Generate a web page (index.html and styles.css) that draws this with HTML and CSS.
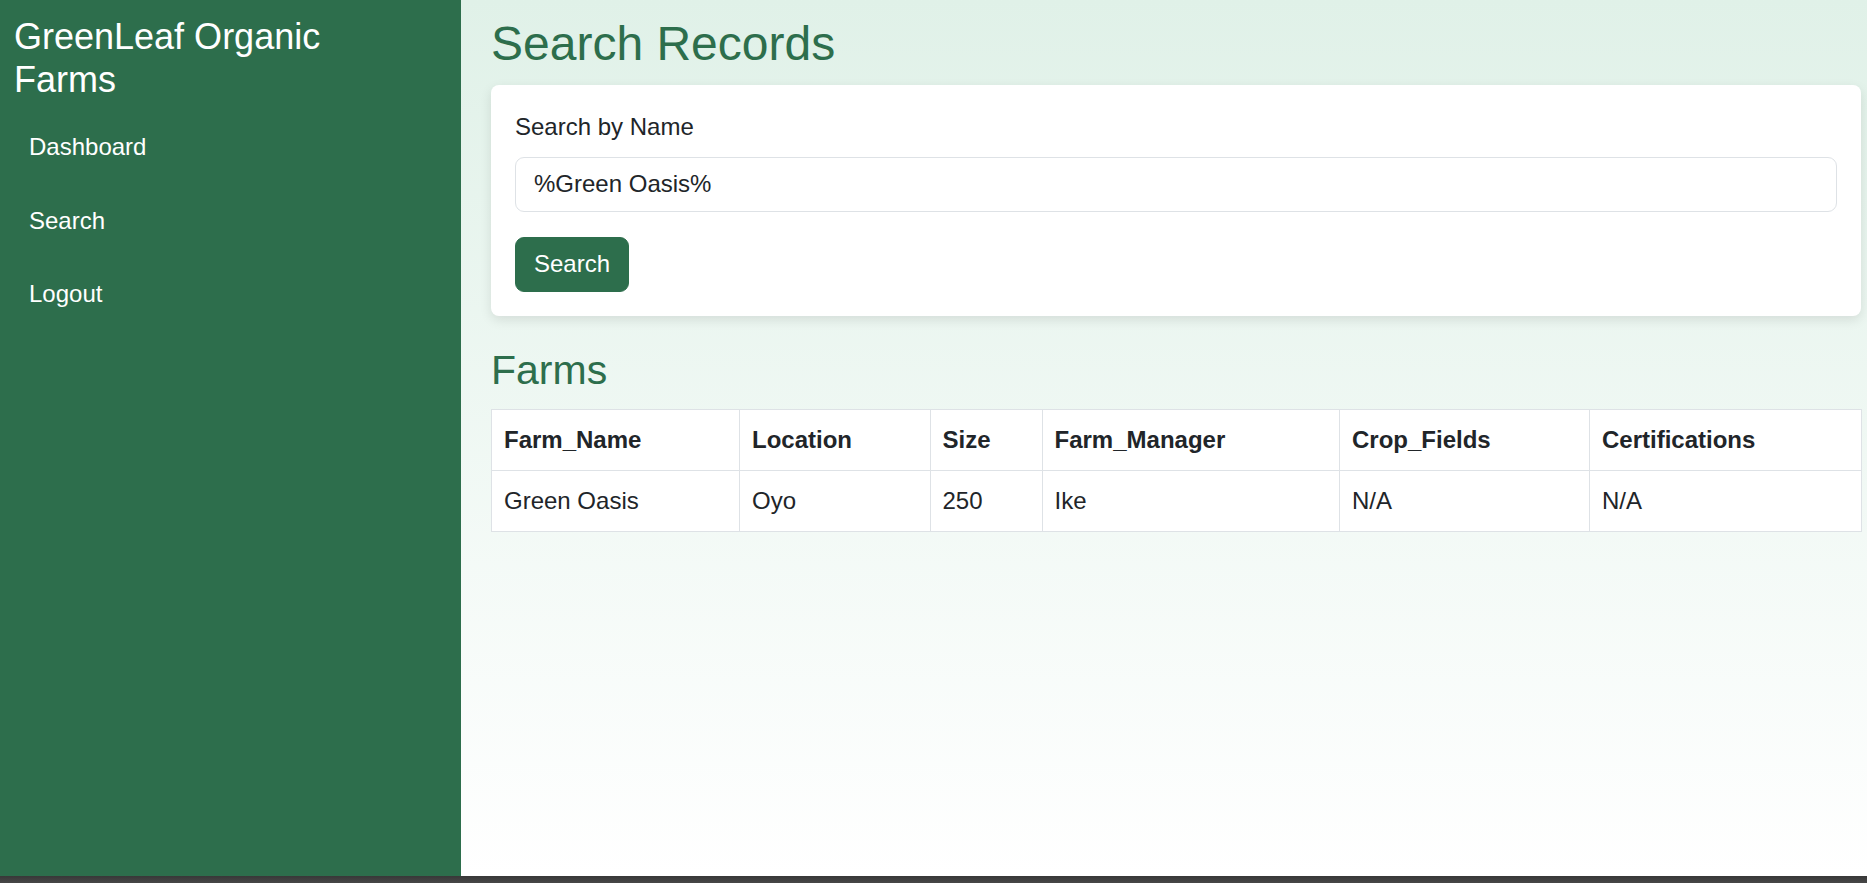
FILE: index.html
```html
<!DOCTYPE html>
<html lang="en">
<head>
<meta charset="utf-8">
<title>GreenLeaf Organic Farms - Search Records</title>
<link rel="stylesheet" href="styles.css">
</head>
<body>
<div class="app">
  <aside class="sidebar">
    <h2 class="brand">GreenLeaf Organic Farms</h2>
    <nav class="nav">
      <a class="nav-link" href="#">Dashboard</a>
      <a class="nav-link" href="#">Search</a>
      <a class="nav-link" href="#">Logout</a>
    </nav>
  </aside>
  <main class="main">
    <h1 class="page-title">Search Records</h1>
    <form class="card">
      <label class="form-label" for="name">Search by Name</label>
      <input class="form-control" id="name" type="text" value="%Green Oasis%">
      <button class="btn" type="button">Search</button>
    </form>
    <h3 class="section-title">Farms</h3>
    <table class="table">
      <colgroup>
        <col class="c1"><col class="c2"><col class="c3"><col class="c4"><col class="c5"><col class="c6">
      </colgroup>
      <thead>
        <tr><th>Farm_Name</th><th>Location</th><th>Size</th><th>Farm_Manager</th><th>Crop_Fields</th><th>Certifications</th></tr>
      </thead>
      <tbody>
        <tr><td>Green Oasis</td><td>Oyo</td><td>250</td><td>Ike</td><td>N/A</td><td>N/A</td></tr>
      </tbody>
    </table>
  </main>
</div>
<div class="bottom-strip"></div>
</body>
</html>
```
FILE: styles.css
```css
* { box-sizing: border-box; }
html, body { margin: 0; padding: 0; }
body {
  font-family: "Liberation Sans", Arial, sans-serif;
  color: #212529;
  height: 883px;
  overflow: hidden;
  display: flex;
  flex-direction: column;
}
.app {
  display: flex;
  height: 876px;
}
.sidebar {
  width: 461px;
  flex: none;
  background: #2d6e4c;
  color: #fff;
  padding: 15px 14px;
}
.brand {
  margin: 0 0 17px;
  max-width: 380px;
  font-size: 36px;
  line-height: 43.2px;
  font-weight: normal;
}
.nav { display: flex; flex-direction: column; gap: 15px; }
.nav-link {
  display: block;
  color: #fff;
  text-decoration: none;
  font-size: 24px;
  line-height: 28.5px;
  padding: 15px 15px;
}
.main {
  flex: 1;
  min-width: 0;
  padding: 14.6px 6px 0 30px;
  background: linear-gradient(to bottom, #e0f1e8 0%, #ffffff 100%);
}
.page-title {
  margin: 0 0 12.8px;
  font-size: 48px;
  line-height: 57.6px;
  font-weight: normal;
  color: #2d6e4c;
}
.card {
  margin: 0;
  background: #fff;
  border-radius: 8px;
  padding: 24px;
  box-shadow: 0 4px 12px rgba(0, 0, 0, 0.1);
}
.form-label {
  display: block;
  font-size: 24px;
  line-height: 36px;
  margin-bottom: 12px;
  color: #212529;
}
.form-control {
  display: block;
  width: 100%;
  font-family: inherit;
  font-size: 24px;
  line-height: 36px;
  padding: 8.5px 18px;
  border: 1px solid #dee2e6;
  border-radius: 9px;
  color: #212529;
  background: #fff;
  margin: 0 0 25px;
  outline: none;
}
.btn {
  display: inline-block;
  font-family: inherit;
  font-size: 24px;
  line-height: 36px;
  padding: 8.5px 18px;
  border: 1px solid #2d6e4c;
  border-radius: 9px;
  background: #2d6e4c;
  color: #fff;
  margin: 0;
}
.section-title {
  margin: 30px 0 13.6px;
  font-size: 41px;
  line-height: 49.2px;
  font-weight: normal;
  color: #2d6e4c;
}
.table {
  width: 100%;
  table-layout: fixed;
  border-collapse: collapse;
  background: #fff;
  font-size: 24px;
  line-height: 36px;
  color: #212529;
}
.table th, .table td {
  border: 1px solid #dee2e6;
  padding: 12px;
  text-align: left;
  vertical-align: top;
  white-space: nowrap;
}
.table th { font-weight: bold; }
.c1 { width: 248px; }
.c2 { width: 190.5px; }
.c3 { width: 112px; }
.c4 { width: 297.5px; }
.c5 { width: 250px; }
.c6 { width: 271.5px; }
.bottom-strip {
  height: 7px;
  flex: none;
  background: linear-gradient(to bottom, #383838, #474747);
}
```
